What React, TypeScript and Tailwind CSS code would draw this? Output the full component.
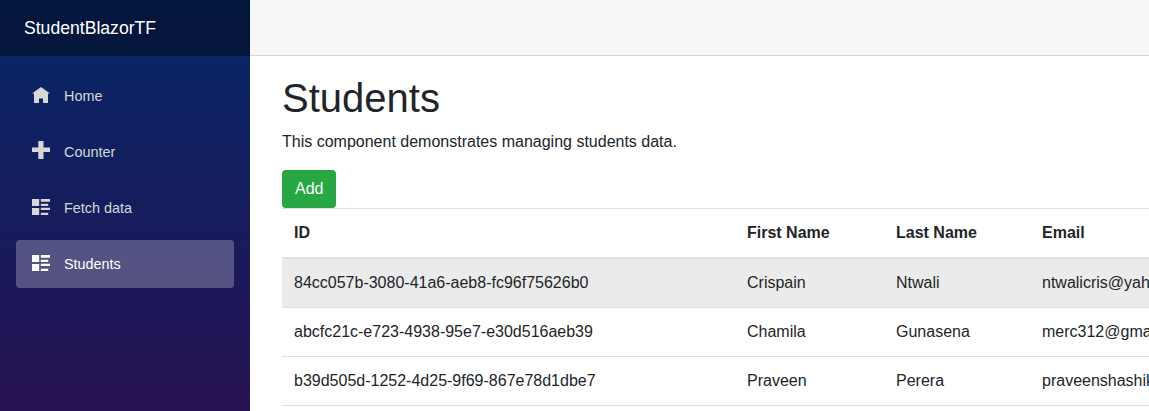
import React from "react";

const icons = {
  home: (
    <svg className="mt-[1px] h-[16px] w-[18px]" viewBox="0 0 18 16" fill="currentColor">
      <path d="M9 0l-9 6.6h2v9.4h5v-4.6h4v4.6h5v-9.4h2l-9-6.6z" />
    </svg>
  ),
  plus: (
    <svg className="mt-[-1px] h-[18px] w-[18px]" viewBox="0 0 18 18" fill="currentColor">
      <path d="M6.3 0v6.6h-6.3v4.4h6.3v7h5.2v-7h6.5v-4.4h-6.5v-6.6z" />
    </svg>
  ),
  list: (
    <svg className="mt-[1px] h-[16px] w-[18px]" viewBox="0 0 18 16" fill="currentColor">
      <path d="M0 0h7.2v7h-7.2zM8.8 0h9.2v2.7h-9.2zM8.8 4.7h7.4v2.3h-7.4zM0 9h7.2v7h-7.2zM8.8 8.7h9.2v2.4h-9.2zM8.8 13.7h7.4v2.3h-7.4z" />
    </svg>
  ),
};

const links: { label: string; icon: keyof typeof icons; active?: boolean }[] = [
  { label: "Home", icon: "home" },
  { label: "Counter", icon: "plus" },
  { label: "Fetch data", icon: "list" },
  { label: "Students", icon: "list", active: true },
];

const students = [
  ["84cc057b-3080-41a6-aeb8-fc96f75626b0", "Crispain", "Ntwali", "ntwalicris@yahoo.com"],
  ["abcfc21c-e723-4938-95e7-e30d516aeb39", "Chamila", "Gunasena", "merc312@gmail.com"],
  ["b39d505d-1252-4d25-9f69-867e78d1dbe7", "Praveen", "Perera", "praveenshashika@gmail.com"],
];

function Sidebar() {
  return (
    <aside className="h-full w-[250px] shrink-0 bg-[linear-gradient(180deg,rgb(5,39,103)_0px,#3a0647_650px)]">
      <div className="flex h-14 items-center bg-black/40 pl-6 text-[17.6px] text-white">StudentBlazorTF</div>
      <nav className="flex flex-col gap-2 px-4 pt-4">
        {links.map((link) => (
          <a
            key={link.label}
            href="#"
            className={
              link.active
                ? "flex h-12 items-center rounded-[4px] bg-white/25 px-4 text-[14.4px] text-white"
                : "flex h-12 items-center rounded-[4px] px-4 text-[14.4px] text-[#d7d7d7]"
            }
          >
            <span className="mr-[14px] flex h-[20px] w-[18px] items-start">{icons[link.icon]}</span>
            <span className="pt-[2px]">{link.label}</span>
          </a>
        ))}
      </nav>
    </aside>
  );
}

export default function App() {
  return (
    <div className="flex h-[411px] w-[1149px] overflow-hidden bg-white font-['Liberation_Sans',Arial,sans-serif] text-base text-[#212529]">
      <Sidebar />
      <main className="min-w-0 flex-1 overflow-hidden">
        <div className="h-14 border-b border-[#d6d5d5] bg-[#f7f7f7]" />
        <div className="pt-[17.6px] pl-8">
          <h1 className="mb-2 text-[40px] leading-[48px]">Students</h1>
          <p className="mb-4 leading-6">This component demonstrates managing students data.</p>
          <button className="block h-[38px] rounded-[4px] bg-[#28a745] px-[13px] leading-6 text-white">Add</button>
          <table className="w-[1000px] table-fixed border-collapse text-left">
            <colgroup>
              <col className="w-[453px]" />
              <col className="w-[149px]" />
              <col className="w-[146px]" />
              <col />
            </colgroup>
            <thead>
              <tr className="border-t border-b-2 border-t-[#dee2e6] border-b-[#dee2e6]">
                {["ID", "First Name", "Last Name", "Email"].map((heading) => (
                  <th key={heading} className="p-3 leading-6 font-bold">
                    {heading}
                  </th>
                ))}
              </tr>
            </thead>
            <tbody>
              {students.map((student, index) => (
                <tr
                  key={student[0]}
                  className={index === 0 ? "border-b border-[#dee2e6] bg-[#ebebeb]" : "border-b border-[#dee2e6]"}
                >
                  {student.map((value) => (
                    <td key={value} className="p-3 leading-6">
                      {value}
                    </td>
                  ))}
                </tr>
              ))}
            </tbody>
          </table>
        </div>
      </main>
    </div>
  );
}
